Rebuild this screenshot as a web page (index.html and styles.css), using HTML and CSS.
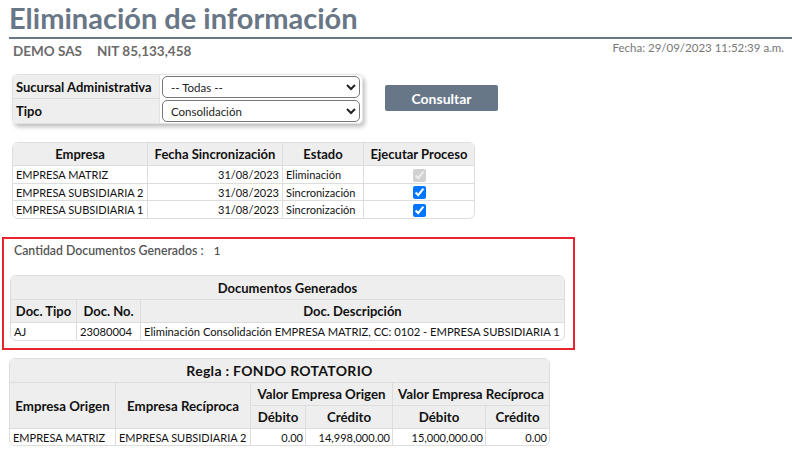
FILE: index.html
```html
<!DOCTYPE html>
<html lang="es">
<head>
<meta charset="utf-8">
<title>Eliminación de información</title>
<link rel="stylesheet" href="styles.css">
</head>
<body>
<div class="page">
  <h1 class="title">Eliminación de información</h1>
  <div class="info">
    <div class="company"><span>DEMO SAS</span><span>NIT 85,133,458</span></div>
    <div class="fecha">Fecha: 29/09/2023 11:52:39 a.m.</div>
  </div>

  <div class="form-row">
    <table class="form-table">
      <tr>
        <th>Sucursal Administrativa</th>
        <td><select class="sel"><option>-- Todas --</option></select></td>
      </tr>
      <tr>
        <th>Tipo</th>
        <td><select class="sel"><option>Consolidación</option></select></td>
      </tr>
    </table>
    <button class="btn">Consultar</button>
  </div>

  <table class="grid t-empresas">
    <colgroup><col class="c1"><col class="c2"><col class="c3"><col class="c4"></colgroup>
    <thead>
      <tr><th>Empresa</th><th>Fecha Sincronización</th><th>Estado</th><th>Ejecutar Proceso</th></tr>
    </thead>
    <tbody>
      <tr><td>EMPRESA MATRIZ</td><td class="r">31/08/2023</td><td>Eliminación</td><td class="c"><input type="checkbox" checked disabled></td></tr>
      <tr><td>EMPRESA SUBSIDIARIA 2</td><td class="r">31/08/2023</td><td>Sincronización</td><td class="c"><input type="checkbox" checked></td></tr>
      <tr><td>EMPRESA SUBSIDIARIA 1</td><td class="r">31/08/2023</td><td>Sincronización</td><td class="c"><input type="checkbox" checked></td></tr>
    </tbody>
  </table>

  <section class="highlight">
    <div class="cantidad"><span class="lbl">Cantidad Documentos Generados :</span><span class="val">1</span></div>
    <table class="grid t-docs">
      <colgroup><col class="d1"><col class="d2"><col class="d3"></colgroup>
      <thead>
        <tr><th colspan="3" class="cap">Documentos Generados</th></tr>
        <tr><th>Doc. Tipo</th><th>Doc. No.</th><th>Doc. Descripción</th></tr>
      </thead>
      <tbody>
        <tr><td>AJ</td><td>23080004</td><td>Eliminación Consolidación EMPRESA MATRIZ, CC: 0102 - EMPRESA SUBSIDIARIA 1</td></tr>
      </tbody>
    </table>
  </section>

  <table class="grid t-regla">
    <colgroup><col class="e1"><col class="e2"><col class="e3"><col class="e4"><col class="e5"><col class="e6"></colgroup>
    <thead>
      <tr><th colspan="6" class="cap">Regla : FONDO ROTATORIO</th></tr>
      <tr><th rowspan="2">Empresa Origen</th><th rowspan="2">Empresa Recíproca</th><th colspan="2">Valor Empresa Origen</th><th colspan="2" class="last">Valor Empresa Recíproca</th></tr>
      <tr><th>Débito</th><th>Crédito</th><th>Débito</th><th>Crédito</th></tr>
    </thead>
    <tbody>
      <tr><td>EMPRESA MATRIZ</td><td>EMPRESA SUBSIDIARIA 2</td><td class="r">0.00</td><td class="r">14,998,000.00</td><td class="r">15,000,000.00</td><td class="r">0.00</td></tr>
    </tbody>
  </table>
</div>
</body>
</html>
```

FILE: styles.css
```css
* { box-sizing: border-box; }
body {
  margin: 0;
  font-family: Lato, "Open Sans", sans-serif;
  color: #222;
  background: #fff;
}
.page {
  padding: 0 0 0 9px;
}
.title {
  margin: 0;
  padding: 2px 0 4px 0;
  font-size: 29px;
  line-height: 31px;
  font-weight: 700;
  color: #687686;
  border-bottom: 2px solid #687686;
}
.info {
  display: flex;
  justify-content: space-between;
  align-items: flex-start;
  padding: 0 8px 0 4px;
}
.company {
  display: flex;
  gap: 15px;
  margin-top: 4px;
  font-size: 13.5px;
  font-weight: 700;
  color: #6b6b6b;
}
.fecha {
  font-size: 11.5px;
  color: #777;
  margin-top: 2px;
}
.form-row {
  display: flex;
  align-items: flex-start;
  gap: 22px;
  margin-top: 15px;
  padding-left: 3px;
}
.form-table {
  border-collapse: separate;
  border-spacing: 0;
  border: 1px solid #e2e2e2;
  border-radius: 5px;
  box-shadow: 2px 3px 4px rgba(0,0,0,0.25);
  font-size: 13px;
}
.form-table th {
  width: 147px;
  background: #eeeeee;
  text-align: left;
  font-weight: 700;
  color: #111;
  padding: 0 2px 0 3px;
  height: 24px;
  border-right: 1px solid #e2e2e2;
  white-space: nowrap;
}
.form-table tr:first-child th { border-bottom: 1px solid #dcdcdc; border-top-left-radius: 5px; }
.form-table tr:last-child th { border-bottom-left-radius: 5px; }
.form-table td {
  padding: 1px 2px 1px 2px;
}
.sel {
  display: block;
  width: 198px;
  height: 22px;
  font-family: Lato, "Open Sans", sans-serif;
  font-size: 11.5px;
  color: #222;
  border: 1px solid #777;
  border-radius: 5px;
  background: #fff;
  padding: 0 4px;
}
.btn {
  margin-top: 11px;
  width: 113px;
  height: 26px;
  border: 0;
  border-radius: 2px;
  background: #677788;
  color: #fff;
  font-family: Lato, "Open Sans", sans-serif;
  font-weight: 700;
  font-size: 14px;
  text-align: center;
  padding: 0;
}
.grid {
  border-collapse: separate;
  border-spacing: 0;
  border: 1px solid #dddddd;
  border-radius: 6px;
  table-layout: fixed;
  color: #111;
}
.grid th {
  background: #eeeeee;
  font-weight: 700;
  font-size: 13px;
  text-align: center;
  border-right: 1px solid #dddddd;
  border-bottom: 1px solid #dddddd;
  padding: 0 2px;
  height: 23px;
  white-space: nowrap;
}
.grid td {
  border-right: 1px solid #dddddd;
  border-bottom: 1px solid #dddddd;
  padding: 0 3px;
  height: 17px;
  white-space: nowrap;
  overflow: hidden;
}
.grid tr > :last-child, .grid .last { border-right: 0; }
.grid tbody tr:last-child td { border-bottom: 0; }
.grid thead tr:first-child th:first-child { border-top-left-radius: 6px; }
.grid thead tr:first-child th:last-child { border-top-right-radius: 6px; }
.grid .r { text-align: right; }
.grid .c { text-align: center; }
.grid input[type=checkbox] {
  margin: 0;
  width: 13px;
  height: 13px;
  vertical-align: middle;
}
.t-empresas {
  margin: 18px 0 0 3px;
  width: 462px;
}
.t-empresas td { font-size: 11px; height: 17px; }
.t-empresas tbody tr:first-child td { height: 18px; }
.t-empresas .c1 { width: 135px; }
.t-empresas .c2 { width: 135px; }
.t-empresas .c3 { width: 81px; }
.t-empresas .c4 { width: 110px; }
.highlight {
  margin: 18px 0 0 -7px;
  width: 573px;
  border: 2px solid #e8242c;
  padding: 4px 8px 7px 6px;
}
.cantidad {
  display: flex;
  gap: 10px;
  font-size: 12.3px;
  font-weight: 600;
  color: #555;
  padding-left: 4px;
}
.cantidad .val { font-weight: 400; color: #444; }
.t-docs {
  margin-top: 17px;
  width: 555px;
}
.t-docs .cap { height: 24px; }
.t-docs td { font-size: 11.2px; }
.t-docs .d1 { width: 66px; }
.t-docs .d2 { width: 64px; }
.t-regla {
  margin-top: 8px;
  width: 540px;
}
.t-regla th { font-size: 13.3px; }
.t-regla .cap { height: 24px; font-size: 14px; letter-spacing: 0.3px; }
.t-regla td { font-size: 11px; height: 16px; padding: 0 2px 0 3px; }
.t-regla .e1 { width: 106px; }
.t-regla .e2 { width: 135px; }
.t-regla .e3 { width: 55px; }
.t-regla .e4 { width: 87px; }
.t-regla .e5 { width: 93px; }
.t-regla .e6 { width: 63px; }
```
